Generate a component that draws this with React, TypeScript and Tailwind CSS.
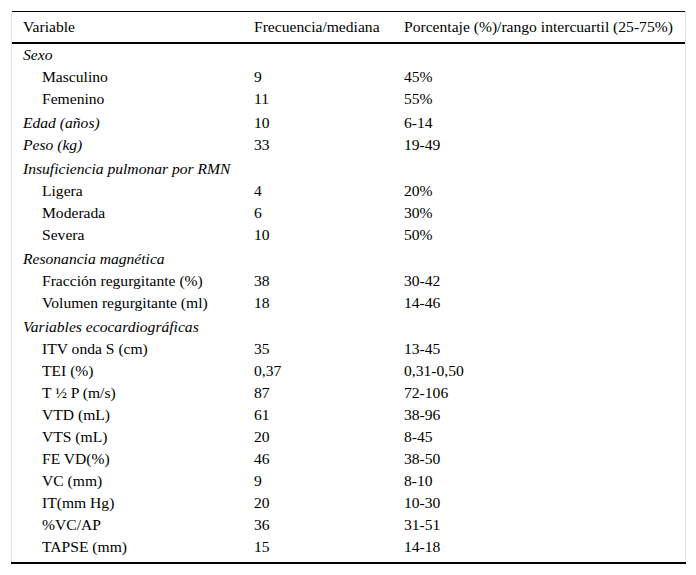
type Row = {
  label: string;
  freq?: string;
  pct?: string;
  group?: boolean;
  spaced?: boolean;
};

const rows: Row[] = [
  { label: 'Sexo', group: true },
  { label: 'Masculino', freq: '9', pct: '45%' },
  { label: 'Femenino', freq: '11', pct: '55%' },
  { label: 'Edad (años)', freq: '10', pct: '6-14', group: true, spaced: true },
  { label: 'Peso (kg)', freq: '33', pct: '19-49', group: true },
  { label: 'Insuficiencia pulmonar por RMN', group: true, spaced: true },
  { label: 'Ligera', freq: '4', pct: '20%' },
  { label: 'Moderada', freq: '6', pct: '30%' },
  { label: 'Severa', freq: '10', pct: '50%' },
  { label: 'Resonancia magnética', group: true, spaced: true },
  { label: 'Fracción regurgitante (%)', freq: '38', pct: '30-42' },
  { label: 'Volumen regurgitante (ml)', freq: '18', pct: '14-46' },
  { label: 'Variables ecocardiográficas', group: true, spaced: true },
  { label: 'ITV onda S (cm)', freq: '35', pct: '13-45' },
  { label: 'TEI (%)', freq: '0,37', pct: '0,31-0,50' },
  { label: 'T ½ P (m/s)', freq: '87', pct: '72-106' },
  { label: 'VTD (mL)', freq: '61', pct: '38-96' },
  { label: 'VTS (mL)', freq: '20', pct: '8-45' },
  { label: 'FE VD(%)', freq: '46', pct: '38-50' },
  { label: 'VC (mm)', freq: '9', pct: '8-10' },
  { label: 'IT(mm Hg)', freq: '20', pct: '10-30' },
  { label: '%VC/AP', freq: '36', pct: '31-51' },
  { label: 'TAPSE (mm)', freq: '15', pct: '14-18' },
];

export default function App() {
  return (
    <div className="min-h-[575px] w-[696px] bg-white pt-[11px] pl-[11px] [font-family:'Liberation_Serif',serif] text-[15.6px] text-black">
      <div className="w-[675px] border-x border-[#e4e4e4] pb-[4px]">
        <table className="w-full border-collapse">
          <thead>
            <tr className="h-[31px] border-t border-black border-b-2">
              <th className="w-[231px] pl-[11px] text-left font-normal">Variable</th>
              <th className="w-[150px] pl-[11px] text-left font-normal">Frecuencia/mediana</th>
              <th className="pl-[11px] text-left font-normal whitespace-nowrap">Porcentaje (%)/rango intercuartil (25-75%)</th>
            </tr>
          </thead>
          <tbody>
            {rows.map((r) => (
              <tr key={r.label} className={r.spaced ? 'h-[24px]' : 'h-[22px]'}>
                <td className={`${r.group ? 'pl-[11px] italic' : 'pl-[30px]'} ${r.spaced ? 'pt-[2px]' : ''} leading-[22px] whitespace-nowrap`}>
                  {r.label}
                </td>
                <td className={`pl-[11px] ${r.spaced ? 'pt-[2px]' : ''} leading-[22px]`}>{r.freq}</td>
                <td className={`pl-[11px] ${r.spaced ? 'pt-[2px]' : ''} leading-[22px]`}>{r.pct}</td>
              </tr>
            ))}
          </tbody>
        </table>
      </div>
      <div className="h-[2px] w-[675px] bg-black" />
    </div>
  );
}
